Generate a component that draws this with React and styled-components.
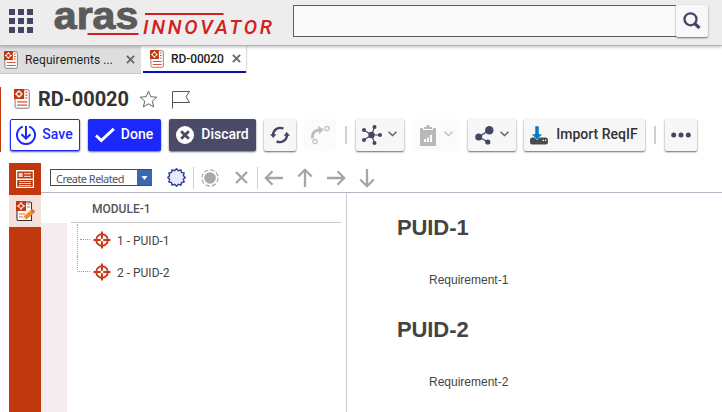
import React from "react";
import styled, { createGlobalStyle } from "styled-components";

const GlobalStyle = createGlobalStyle`
  * { box-sizing: border-box; }
  body { margin: 0; background: #fff; overflow: hidden; font-family: Roboto, "Liberation Sans", sans-serif; color: #333; }
  button { font-family: inherit; padding: 0; margin: 0; }
  svg { display: block; flex: none; }
`;

const ink = "#444463";
const brand = "#c1380f";

const Page = styled.div`
  width: 722px;
  height: 412px;
  display: flex;
  flex-direction: column;
  overflow: hidden;
`;
const Header = styled.header`
  height: 46px;
  flex: none;
  display: flex;
  align-items: flex-start;
  background: #ededed;
  border-bottom: 1px solid #b4b4b4;
  box-shadow: 0 1px 3px rgba(0, 0, 0, 0.25);
  z-index: 1;
`;
const AppGrid = styled.div`
  display: grid;
  grid-template-columns: repeat(3, 6px);
  grid-auto-rows: 6px;
  gap: 3px;
  margin: 9px 20px 0 9px;
`;
const Cell = styled.i`
  background: ${ink};
`;
const Search = styled.div`
  display: flex;
  margin: 5px 0 0 20px;
`;
const SearchInput = styled.input`
  width: 383px;
  height: 32px;
  padding: 0 8px;
  border: 1px solid #5c5c5c;
  border-right: 0;
  background: #fafafa;
  outline: 0;
`;
const SearchButton = styled.button`
  width: 32px;
  height: 32px;
  display: grid;
  place-items: center;
  border: 0;
  border-radius: 2px;
  background: #f8f8f8;
  box-shadow: 0 1px 2px rgba(0, 0, 0, 0.55);
`;
const Tabs = styled.nav`
  height: 28px;
  flex: none;
  display: flex;
  gap: 2px;
`;
const Tab = styled.div`
  width: ${(p) => (p.$active ? 103 : 141)}px;
  height: ${(p) => (p.$active ? 27 : 28)}px;
  padding: 0 ${(p) => (p.$active ? 5 : 6)}px 0 ${(p) => (p.$active ? 7 : 4)}px;
  display: flex;
  align-items: center;
  background: ${(p) => (p.$active ? "#fff" : "#dedede")};
  border-bottom: ${(p) => (p.$active ? "2px solid #0a10b0" : "1px solid #c6c6c6")};
  box-shadow: ${(p) => (p.$active ? "1px 0 1px #ddd" : "none")};
`;
const TabLabel = styled.span`
  flex: 1;
  margin-left: 7px;
  font-size: 12px;
  line-height: 24px;
  font-weight: ${(p) => (p.$active ? 500 : 400)};
  letter-spacing: ${(p) => (p.$active ? -0.1 : 0.1)}px;
  color: ${(p) => (p.$active ? "#1d1d1d" : "#222")};
  white-space: nowrap;
`;
const Form = styled.section`
  margin-top: 13px;
  height: 65px;
  flex: none;
  border-left: 1px solid ${brand};
`;
const TitleRow = styled.div`
  height: 32px;
  padding: 0 0 8px 13px;
  display: flex;
  align-items: center;
`;
const Title = styled.h1`
  width: 92px;
  margin: 0 9px 0 8px;
  font-size: 20px;
  line-height: 24px;
  font-weight: 700;
  white-space: nowrap;
`;
const Flag = styled.div`
  margin-left: 13px;
`;
const Toolbar = styled.div`
  display: flex;
  align-items: center;
  gap: 8px;
  padding-left: 9px;
`;
const variants = {
  outline: "background:#fff;color:#1a2bf5;border:1px solid #1a2bf5;",
  primary: "background:#1b28fb;color:#fff;",
  dark: "background:#4b4a67;color:#fff;",
  plain: `background:#f7f7f7;color:${ink};`,
  disabled: "background:#fbfbfb;color:#b9b9b9;",
};
const ToolButton = styled.button`
  width: ${(p) => p.$w}px;
  height: 32px;
  display: flex;
  align-items: center;
  justify-content: center;
  gap: ${(p) => p.$gap ?? 6}px;
  border: 0;
  border-radius: 2px;
  font-size: 14px;
  font-weight: 500;
  line-height: 30px;
  white-space: nowrap;
  ${(p) => variants[p.$kind || "plain"]}
  padding-right: ${(p) => p.$shift || 0}px;
  box-shadow: ${(p) => (p.$kind === "disabled" ? "none" : "0 1px 2px rgba(0,0,0,.6)")};
`;
const Caption = styled.span`
  color: ${(p) => p.$color || "inherit"};
  padding-bottom: 2px;
`;
const Divider = styled.i`
  width: ${(p) => p.$w || 2}px;
  height: ${(p) => p.$h || 18}px;
  margin: ${(p) => p.$m || "0 1px"};
  flex: none;
  background: #d0d0d0;
`;
const Workspace = styled.main`
  display: flex;
  flex: 1;
  margin: 11px 0 0 9px;
`;
const Sidebar = styled.aside`
  width: 32px;
  flex: none;
  background: ${brand};
`;
const SideItem = styled.div`
  height: 32px;
  display: grid;
  place-items: center;
  background: ${(p) => (p.$active ? "#f4e1da" : brand)};
`;
const Editor = styled.div`
  flex: 1;
  display: flex;
  flex-direction: column;
`;
const EditorBar = styled.div`
  height: 30px;
  flex: none;
  display: flex;
  align-items: center;
  padding-left: 9px;
  border-bottom: 1px solid #b3b5c5;
`;
const Select = styled.div`
  width: 102px;
  height: 17px;
  display: flex;
  justify-content: space-between;
  border: 1px solid #444b58;
  border-right-color: #3967b0;
  margin-right: 15px;
  padding-left: 5px;
  font: 11px/17px "Noto Sans", "Open Sans", sans-serif;
  letter-spacing: -0.55px;
  white-space: nowrap;
  color: #4f5562;
`;
const SelectArrow = styled.span`
  width: 14px;
  display: grid;
  place-items: center;
  background: #3967b0;
`;
const Panes = styled.div`
  flex: 1;
  display: flex;
`;
const TreePane = styled.div`
  width: 306px;
  flex: none;
  display: flex;
  flex-direction: column;
  border-right: 1px solid #ccc;
`;
const TreeHeader = styled.div`
  height: 30px;
  flex: none;
  margin: 0 5px 0 30px;
  padding-left: 21px;
  font-size: 12px;
  font-weight: 500;
  line-height: 32px;
  color: #555;
  border-bottom: 1px solid #c8c8c8;
`;
const TreeBody = styled.div`
  flex: 1;
  display: flex;
`;
const Gutter = styled.div`
  width: 26px;
  background: #f4ecee;
`;
const TreeRows = styled.div`
  padding: 1px 0 0 10px;
`;
const TreeRow = styled.div`
  height: 32px;
  display: flex;
  align-items: center;
  font-size: 12px;
  color: #444;
`;
const Branch = styled.div`
  width: 13px;
  height: 32px;
  margin-right: 3px;
  border-left: 1px dotted ${(p) => (p.$last ? "transparent" : "#aaa")};
  &::before {
    content: "";
    display: block;
    height: 15px;
    margin-left: ${(p) => (p.$last ? -1 : 2)}px;
    border-left: ${(p) => (p.$last ? "1px dotted #aaa" : "0")};
    border-bottom: 1px dotted #999;
  }
`;
const RowLabel = styled.span`
  margin-left: 6px;
  padding-top: 2px;
  line-height: 16px;
`;
const Document = styled.article`
  padding: 21px 0 0 50px;
  font-family: "Liberation Sans", Arial, sans-serif;
`;
const Heading = styled.h2`
  margin: 0;
  height: 28px;
  font-size: 22px;
  line-height: 28px;
  letter-spacing: -0.1px;
  color: #444;
`;
const Paragraph = styled.p`
  margin: 30px 0 28px 32px;
  height: 16px;
  font-size: 12px;
  line-height: 16px;
  color: #444;
`;

const Logo = () => (
  <svg width="220" height="44" viewBox="0 0 220 44" overflow="visible">
    <text x=".8" y="28.8" fontFamily="Liberation Sans, Arial" fontWeight="700" fontSize="39" fill="#5b5b5b" stroke="#5b5b5b" strokeWidth="1" textLength="84.5" lengthAdjust="spacingAndGlyphs">aras</text>
    <path d="M34.5 34H85.5M92 14H170.5" stroke="#d11f22" strokeWidth="2" />
    <text x="90" y="34.4" fontFamily="Roboto" fontStyle="italic" fontWeight="500" fontSize="20" fill="#d11f22" textLength="129">INNOVATOR</text>
  </svg>
);
const DocIcon = ({ h = 18, w = 15 }) => (
  <svg width={w} height={h} viewBox="0 0 15 18" preserveAspectRatio="none">
    <rect x="1" y=".7" width="13.3" height="16.6" rx="1.5" fill="#fff" stroke="#777" strokeWidth=".9" />
    <path d="M0 0h9.5v9H0z" fill={brand} />
    <circle cx="4.7" cy="4.5" r="2.1" fill="none" stroke="#fff" />
    <path d="M4.7 1v2M4.7 6v2M1 4.5h2M6.4 4.5h2" stroke="#fff" strokeWidth=".9" />
    <path d="M10.7 3h1.8M10.7 5.5h1.8M10.7 8h1.8M3 11.5h9.5M3 14.5h9.5" stroke="#dc5530" strokeWidth="1.1" />
  </svg>
);
const CloseIcon = () => (
  <svg width="9" height="9" viewBox="0 0 9 9"><path d="M.9.9l7.2 7.2M8.1.9L.9 8.1" stroke="#6b6b6b" strokeWidth="2" /></svg>
);
const SearchIcon = () => (
  <svg width="18" height="18" viewBox="0 0 18 18" fill="none" stroke={ink}>
    <circle cx="7.5" cy="7.3" r="6" strokeWidth="2.3" /><path d="M11.8 11.6l4.7 4.4" strokeWidth="3.2" />
  </svg>
);
const StarIcon = () => (
  <svg width="19" height="18" viewBox="0 0 19 18"><path d="M9.5 1.2l2.3 5.5 6 .5-4.5 3.9 1.3 5.8-5.1-3.1-5.1 3.1 1.3-5.8L1.2 7.2l6-.5z" fill="#fff" stroke="#555" strokeWidth=".9" /></svg>
);
const FlagIcon = () => (
  <svg width="20" height="19" viewBox="0 0 20 19"><path d="M1.5 18.5V1.5H18.5L15 6.8l3.5 5.7h-17" fill="none" stroke="#555" /></svg>
);
const SaveIcon = () => (
  <svg width="20" height="20" viewBox="0 0 20 20" fill="none" stroke="#1a2bf5" strokeWidth="2">
    <path d="M6.8 1.6a9 9 0 1 0 6.4 0M10 1v12M5.5 9.2l4.5 4.5 4.5-4.5" />
  </svg>
);
const CheckIcon = () => (
  <svg width="20" height="16" viewBox="0 0 20 16"><path d="M1 8.5l5.3 5L18.8 1.8" fill="none" stroke="#fff" strokeWidth="3" /></svg>
);
const DiscardIcon = () => (
  <svg width="18" height="18" viewBox="0 0 18 18"><circle cx="9" cy="9" r="9" fill="#fff" /><path d="M5.2 5.2l7.6 7.6m0-7.6l-7.6 7.6" stroke="#4b4a67" strokeWidth="2.8" /></svg>
);
const RefreshIcon = () => (
  <svg width="20" height="18" viewBox="0 0 20 18" fill="none" stroke={ink} strokeWidth="2.3">
    <path d="M13.4 2.6A7.2 7.2 0 0 0 3 9M6.6 15.4A7.2 7.2 0 0 0 17 9" />
    <path d="M0 8.2h6.4L3.2 12zM20 9.8h-6.4L16.8 6z" fill={ink} stroke="none" />
  </svg>
);
const RouteIcon = () => (
  <svg width="20" height="20" viewBox="0 0 20 20" fill="none" stroke="#bdbdbd">
    <path d="M2.2 13.5C2.3 7.4 5 4.8 9.5 4.8" strokeWidth="2.8" /><path d="M8 1l6 3.5L9 9z" fill="#bdbdbd" stroke="none" />
    <circle cx="17" cy="3.5" r="2.2" strokeWidth="1.2" /><circle cx="5" cy="16.5" r="2.2" strokeWidth="1.2" />
  </svg>
);
const HubIcon = () => (
  <svg width="20" height="20" viewBox="0 0 20 20" fill={ink} stroke={ink}>
    <path d="M9.5 10L12.5 2M9.5 10h9M9.5 10l3 8M9.5 10L2 5M9.5 10L2 15" strokeWidth="1.1" />
    <g stroke="none"><circle cx="9.5" cy="10" r="3.2" /><circle cx="12.5" cy="2" r="2" /><circle cx="18" cy="10" r="2" /><circle cx="12.5" cy="18" r="2" /><circle cx="2" cy="5" r="2" /><circle cx="2" cy="15" r="2" /></g>
  </svg>
);
const ReportIcon = () => (
  <svg width="16" height="21" viewBox="0 0 16 21"><path d="M0 3h3v2h10V3h3v18H0zM4 2h2.5V0h3v2H12v2H4z" fill="#b9b9b9" /><path d="M5 17v-3M8 17v-4.5M11 17v-7" stroke="#fff" strokeWidth="2" /></svg>
);
const ShareIcon = () => (
  <svg width="19" height="19" viewBox="0 0 19 19" fill={ink}><path d="M14 4L4 11l9 5" fill="none" stroke={ink} strokeWidth="1.4" /><circle cx="14.3" cy="4.3" r="4.2" /><circle cx="3.7" cy="11" r="3.5" /><circle cx="12.8" cy="16" r="2.6" /></svg>
);
const ChevronSvg = styled.svg`
  margin-bottom: 2px;
`;
const Chevron = ({ color = "#555" }) => (
  <ChevronSvg width="9" height="6" viewBox="0 0 9 6"><path d="M.6.8l3.9 3.9L8.4.8" fill="none" stroke={color} strokeWidth="1.3" /></ChevronSvg>
);
const ImportIcon = () => (
  <svg width="18" height="19" viewBox="0 0 18 19"><path d="M0 14q0-2.5 2-2.5h14q2 0 2 2.5v2q0 2.5-2 2.5H2q-2 0-2-2.5z" fill="#4b4b4b" /><path d="M12.7 14.3h1.3m1 0h1.3" stroke="#fff" strokeWidth="1.2" /><path d="M5 0h4v8h3.4L7 14 1.6 8H5z" fill="#0878cd" stroke="#f7f7f7" strokeWidth=".5" /></svg>
);
const DotsIcon = () => (
  <svg width="20" height="6" viewBox="0 0 20 6" fill={ink}><circle cx="2.7" cy="3" r="2.5" /><circle cx="10" cy="3" r="2.5" /><circle cx="17.3" cy="3" r="2.5" /></svg>
);
const FormIcon = () => (
  <svg width="18" height="18" viewBox="0 0 18 18">
    <path d="M0 0h18v18H0z" fill="#fff" />
    <path d="M1.2 1.5h15.6v7H1.2zM1.2 10h15.6v6.8H1.2z" fill={brand} />
    <path d="M2.5 3h4.3v4H2.5zM8 3h7v1.2H8zM8 5.8h7V7H8z" fill="#f0c6b8" />
    <path d="M3 11h12v1H3zM3 13h12v1H3zM3 15h12v1H3z" fill="#f0c6b8" />
  </svg>
);
const EditIcon = () => (
  <svg width="19" height="21" viewBox="0 0 19 21">
    <path d="M1 1h13q1.5 0 1.5 1.5v17H2q-1 0-1-1.5z" fill="#fff" stroke="#333" strokeWidth="1.1" /><path d="M0 0h10v10H0z" fill={brand} />
    <circle cx="5" cy="5" r="2.3" stroke="#fff" fill="none" /><path d="M5 .8v2.5M5 6.7v2.5M.8 5h2.5M6.7 5h2.5" stroke="#fff" />
    <path d="M11 3h3M11 6h3M3 13h6M3 16h4" stroke="#dc6540" /><path d="M7 19l1-4 7-6 3 3-7 6z" fill="#f58b1f" /><path d="M14.5 9.2l1.2-1.2q3 .7 3.3 3l-1.5 1.5z" fill="#df674d" /><path d="M7 19l.9-3 2 2z" fill="#fff" />
  </svg>
);
const burst = Array.from({ length: 24 }, (_, i) => {
  const r = i % 2 ? 7.1 : 8.8;
  const a = (i * Math.PI) / 12;
  return `${9.5 + r * Math.sin(a)},${9.5 - r * Math.cos(a)}`;
}).join(" ");
const BurstIcon = () => (
  <svg width="19" height="19" viewBox="0 0 19 19"><polygon points={burst} fill="#e9ebf8" stroke="#303b9e" strokeWidth="1.4" /></svg>
);
const TargetDotIcon = () => (
  <svg width="18" height="18" viewBox="0 0 18 18"><circle cx="9" cy="9" r="5.8" fill="#a8a8a8" /><circle cx="9" cy="9" r="8.1" fill="none" stroke="#a0a0a0" strokeWidth="1.1" strokeDasharray="4.5 1.86" /></svg>
);
const RemoveIcon = () => (
  <svg width="13" height="13" viewBox="0 0 13 13"><path d="M1 1l11 11M12 1L1 12" stroke="#a6a6a6" strokeWidth="2.4" /></svg>
);
const rotation = { left: 0, up: 90, right: 180, down: 270 };
const ArrowIcon = ({ dir }) => (
  <svg width="20" height="20" viewBox="0 0 20 20"><path d="M19 10H2M8.5 3.2L1.8 10l6.7 6.8" transform={`rotate(${rotation[dir]} 10 10)`} fill="none" stroke="#a6a6a6" strokeWidth="2.3" /></svg>
);
const TargetIcon = () => (
  <svg width="18" height="18" viewBox="0 0 18 18" fill="none" stroke="#c43d17"><circle cx="9" cy="9" r="5.8" strokeWidth="1.9" /><path d="M9 .5v7.3M9 10.2v7.3M.5 9h7.3M10.2 9h7.3" strokeWidth="2" /></svg>
);
const Spaced = styled.span`
  margin-left: ${(p) => p.$l}px;
`;

export default function App() {
  return (
    <Page>
      <GlobalStyle />
      <Header>
        <AppGrid>{Array.from({ length: 9 }, (_, i) => <Cell key={i} />)}</AppGrid>
        <Logo />
        <Search>
          <SearchInput aria-label="Search" />
          <SearchButton><SearchIcon /></SearchButton>
        </Search>
      </Header>
      <Tabs>
        <Tab><DocIcon w={14} /><TabLabel>Requirements ...</TabLabel><CloseIcon /></Tab>
        <Tab $active><DocIcon w={14} /><TabLabel $active>RD-00020</TabLabel><CloseIcon /></Tab>
      </Tabs>
      <Form>
        <TitleRow>
          <DocIcon w={16} h={20} />
          <Title>RD-00020</Title>
          <StarIcon />
          <Flag><FlagIcon /></Flag>
        </TitleRow>
        <Toolbar>
          <ToolButton $w={70} $kind="outline" $shift={1}><SaveIcon /><Caption>Save</Caption></ToolButton>
          <ToolButton $w={73} $kind="primary" $shift={1}><CheckIcon /><Caption>Done</Caption></ToolButton>
          <ToolButton $w={87} $kind="dark" $gap={7}><DiscardIcon /><Caption>Discard</Caption></ToolButton>
          <ToolButton $w={32}><RefreshIcon /></ToolButton>
          <ToolButton $w={32} $kind="disabled"><RouteIcon /></ToolButton>
          <Divider />
          <ToolButton $w={48} $shift={1}><HubIcon /><Chevron /></ToolButton>
          <ToolButton $w={48} $kind="disabled" $gap={8}><ReportIcon /><Chevron color="#bbb" /></ToolButton>
          <ToolButton $w={48} $shift={1}><ShareIcon /><Chevron /></ToolButton>
          <ToolButton $w={121} $gap={8} $shift={1}><ImportIcon /><Caption $color="#333">Import ReqIF</Caption></ToolButton>
          <Divider />
          <ToolButton $w={32}><DotsIcon /></ToolButton>
        </Toolbar>
      </Form>
      <Workspace>
        <Sidebar>
          <SideItem><FormIcon /></SideItem>
          <SideItem $active><EditIcon /></SideItem>
        </Sidebar>
        <Editor>
          <EditorBar>
            <Select>
              Create Related
              <SelectArrow><svg width="7" height="4"><path d="M.5 0h6L3.5 4z" fill="#fff" /></svg></SelectArrow>
            </Select>
            <BurstIcon />
            <Divider $w={1} $h={22} $m="0 0 0 7px" />
            <Spaced $l={7}><TargetDotIcon /></Spaced>
            <Spaced $l={16}><RemoveIcon /></Spaced>
            <Divider $w={1} $h={22} $m="0 0 0 9px" />
            <Spaced $l={6}><ArrowIcon dir="left" /></Spaced>
            <Spaced $l={11}><ArrowIcon dir="up" /></Spaced>
            <Spaced $l={11}><ArrowIcon dir="right" /></Spaced>
            <Spaced $l={11}><ArrowIcon dir="down" /></Spaced>
          </EditorBar>
          <Panes>
            <TreePane>
              <TreeHeader>MODULE-1</TreeHeader>
              <TreeBody>
                <Gutter />
                <TreeRows>
                  <TreeRow><Branch /><TargetIcon /><RowLabel>1 - PUID-1</RowLabel></TreeRow>
                  <TreeRow><Branch $last /><TargetIcon /><RowLabel>2 - PUID-2</RowLabel></TreeRow>
                </TreeRows>
              </TreeBody>
            </TreePane>
            <Document>
              <Heading>PUID-1</Heading>
              <Paragraph>Requirement-1</Paragraph>
              <Heading>PUID-2</Heading>
              <Paragraph>Requirement-2</Paragraph>
            </Document>
          </Panes>
        </Editor>
      </Workspace>
    </Page>
  );
}
